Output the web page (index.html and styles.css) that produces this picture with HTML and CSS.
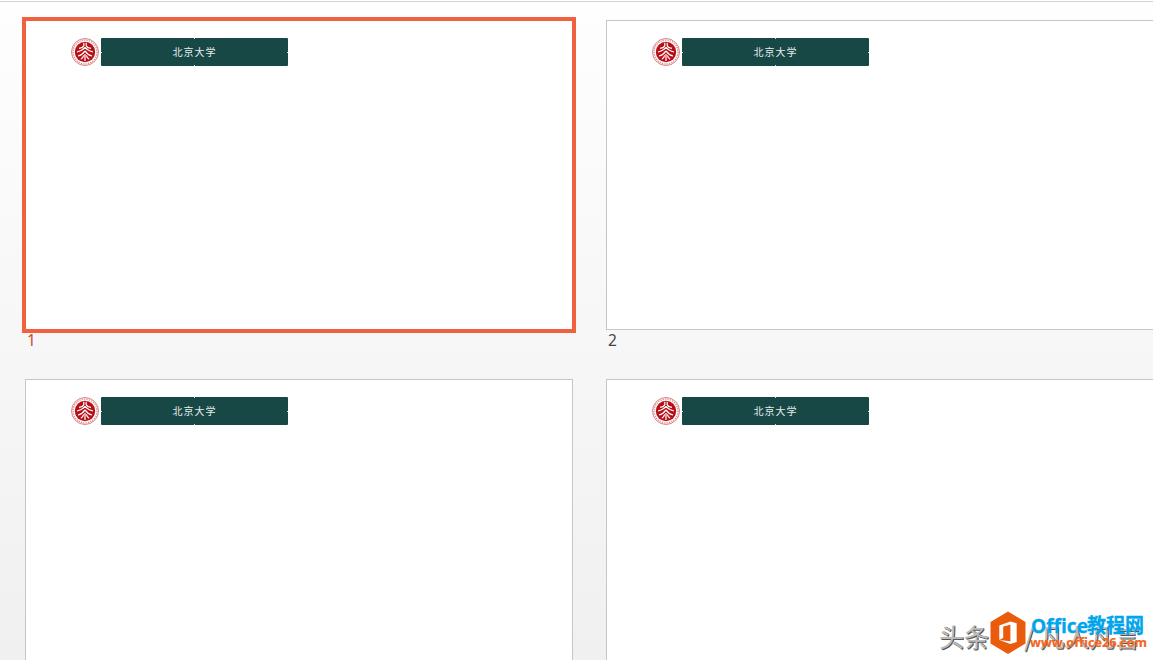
FILE: index.html
```
<!DOCTYPE html>
<html lang="zh-CN">
<head>
  <meta charset="UTF-8">
  <meta name="viewport" content="width=device-width, initial-scale=1.0">
  <title>幻灯片浏览</title>
  <link rel="stylesheet" href="styles.css">
</head>
<body>

<!-- school emblem, shared by all slides -->
<svg class="defs" width="0" height="0">
  <symbol id="emblem" viewBox="0 0 28 28">
    <circle cx="14" cy="14" r="13.5" fill="#fff" stroke="#cf6668" stroke-width="0.8"/>
    <circle cx="14" cy="14" r="12" fill="none" stroke="#d99596" stroke-width="1.4" stroke-dasharray="1.4 1"/>
    <circle cx="14" cy="14" r="10.2" fill="#b80f16"/>
    <g fill="none" stroke="#fff" stroke-width="1.2">
      <path d="M12.8 4.8v3Q12 9.8 8 10.4M15.2 4.8v3Q16 9.8 20 10.4"/>
      <path d="M14 9.4Q11 13 6 14M14 9.4Q17 13 22 14"/>
      <path d="M14 12.8Q11.4 16.8 7 18M14 12.8Q16.6 16.8 21 18"/>
      <path d="M12.6 17.4Q12 20.4 9.8 21.2M15.4 17.4Q16 20.4 18.2 21.2M14 16v7"/>
    </g>
  </symbol>
</svg>

<main class="sorter">
  <section class="item selected">
    <div class="slide">
      <svg class="emblem"><use href="#emblem"/></svg>
      <div class="banner">北京大学</div>
    </div>
    <span class="number">1</span>
  </section>
  <section class="item">
    <div class="slide">
      <svg class="emblem"><use href="#emblem"/></svg>
      <div class="banner">北京大学</div>
    </div>
    <span class="number">2</span>
  </section>
  <section class="item">
    <div class="slide">
      <svg class="emblem"><use href="#emblem"/></svg>
      <div class="banner">北京大学</div>
    </div>
  </section>
  <section class="item">
    <div class="slide">
      <svg class="emblem"><use href="#emblem"/></svg>
      <div class="banner">北京大学</div>
    </div>
  </section>
</main>

<!-- watermarks over the bottom right corner -->
<div class="author">
  <span>头条</span>
  <span>/ 凡人凡言</span>
</div>
<div class="site">
  <svg class="site-logo" viewBox="0 0 36 44">
    <path d="M18 0.5 35.5 11v21.5L18 43 0.5 32.5V11z" fill="#ea5b0c"/>
    <path d="M9.3 14.6 20.4 10.4l6.3 1.9v18.6l-6.3 2L9.3 29l11.1 1.2V13.8l-7.2 1.7v11.6l-3.9 1.9z" fill="#fff"/>
  </svg>
  <div class="site-text">
    <svg class="site-name" viewBox="0 0 122 27">
      <text x="1" y="22" textLength="57" lengthAdjust="spacingAndGlyphs">Office</text>
      <text x="57" y="22" textLength="57" lengthAdjust="spacingAndGlyphs">教程网</text>
    </svg>
    <svg class="site-url" viewBox="0 0 122 18"><text x="0" y="9" textLength="117" lengthAdjust="spacingAndGlyphs">www.office26.com</text></svg>
  </div>
</div>

</body>
</html>
```
FILE: styles.css
```
* { box-sizing: border-box; }
body {
  margin: 0;
  height: 660px;
  overflow: hidden;
  position: relative;
  border-top: 1px solid #fff;
  background: linear-gradient(#fefefe, #f0f0f0);
  font-family: "Open Sans", "Noto Sans CJK SC", sans-serif;
}
.defs { position: absolute; }
.sorter {
  display: grid;
  grid-template-columns: 548px 548px;
  grid-template-rows: 359px 281px;
  column-gap: 33px;
  height: 659px;
  overflow: hidden;
  padding: 18px 0 0 25px;
  border-top: 1px solid #d2d2d2;
}
.slide {
  display: flex;
  align-items: flex-start;
  gap: 2px;
  height: 310px;
  padding: 17px 0 0 45px;
  background: #fff;
  border: 1px solid #c6c6c6;
}
.selected .slide {
  border-color: #f0623f;
  box-shadow: 0 0 0 3px #f0623f;
}
.emblem {
  width: 28px;
  height: 28px;
}
.banner {
  width: 187px;
  height: 28px;
  line-height: 28px;
  background:
    linear-gradient(#d5dfde, #d5dfde) 50% 0 / 1px 1px no-repeat,
    linear-gradient(#d5dfde, #d5dfde) 50% 100% / 1px 1px no-repeat,
    linear-gradient(#d5dfde, #d5dfde) 0 50% / 1px 1px no-repeat,
    linear-gradient(#d5dfde, #d5dfde) 100% 50% / 1px 1px no-repeat,
    #174846;
  border-radius: 1px;
  color: #e6eeed;
  font-family: KaiTi, "Noto Sans CJK SC", sans-serif;
  font-size: 10px;
  letter-spacing: 1px;
  text-align: center;
}
.number {
  display: block;
  padding-left: 2px;
  color: #444;
  font-family: "Noto Sans", sans-serif;
  font-size: 15.5px;
  line-height: 21px;
}
.selected .number { color: #d2492a; }

.author {
  position: absolute;
  left: 939px;
  top: 618px;
  display: flex;
  gap: 35px;
  color: #bcbcbc;
  font-family: "Noto Sans CJK SC", sans-serif;
  font-size: 25px;
  line-height: 34px;
  white-space: nowrap;
  text-shadow: 1px 1px 0 #555, 1px 0 0 #777;
}
.site {
  position: absolute;
  left: 990px;
  top: 610px;
  display: flex;
  gap: 4px;
}
.site-logo {
  width: 36px;
  height: 44px;
}
.site-text {
  display: flex;
  flex-direction: column;
}
.site-name {
  width: 122px;
  height: 27px;
  overflow: visible;
  fill: #00a5ec;
  stroke: #00a5ec;
  stroke-width: 0.3px;
  font-size: 20px;
  font-weight: 700;
}
.site-url {
  width: 122px;
  height: 18px;
  overflow: visible;
  fill: #f26522;
  stroke: #f26522;
  stroke-width: 0.2px;
  font-size: 13px;
  font-weight: 700;
}
```
